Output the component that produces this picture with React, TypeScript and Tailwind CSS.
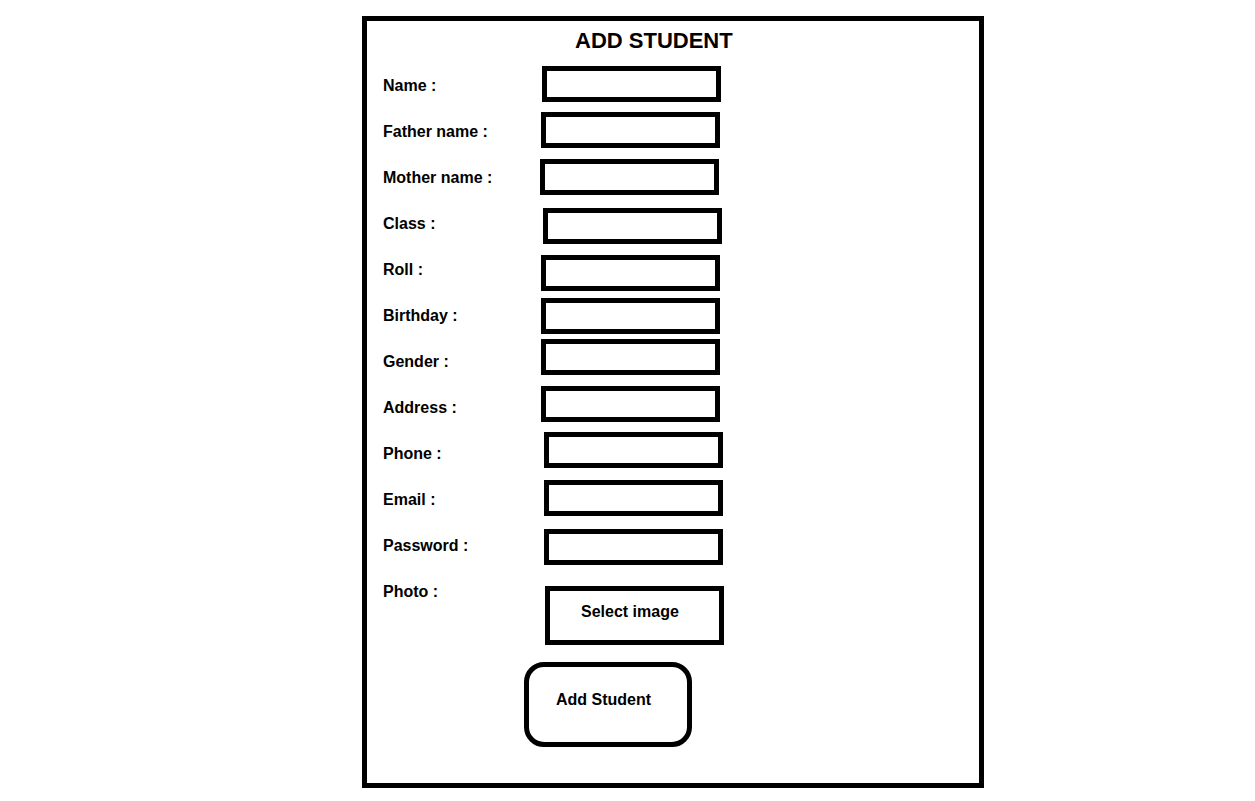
import React from "react";

const labels = [
  "Name :",
  "Father name :",
  "Mother name :",
  "Class :",
  "Roll :",
  "Birthday :",
  "Gender :",
  "Address :",
  "Phone :",
  "Email :",
  "Password :",
  "Photo :",
];

const inputs: { key: string; cls: string }[] = [
  { key: "name", cls: "mt-0 ml-[2px]" },
  { key: "father", cls: "mt-[10px] ml-[1px]" },
  { key: "mother", cls: "mt-[11px] ml-0" },
  { key: "class", cls: "mt-[13px] ml-[3px]" },
  { key: "roll", cls: "mt-[11px] ml-[1px]" },
  { key: "birthday", cls: "mt-[7px] ml-[1px]" },
  { key: "gender", cls: "mt-[5px] ml-[1px]" },
  { key: "address", cls: "mt-[11px] ml-[1px]" },
  { key: "phone", cls: "mt-[10px] ml-[4px]" },
  { key: "email", cls: "mt-[12px] ml-[4px]" },
  { key: "password", cls: "mt-[13px] ml-[4px]" },
];

export default function App() {
  return (
    <div
      className="min-h-[801px] w-full bg-white text-black"
      style={{ fontFamily: '"Liberation Sans", Arial, sans-serif' }}
    >
      <div className="pt-[16px] pl-[362px]">
        <div className="w-[622px] h-[772px] border-[5px] border-black flex flex-col">
          <h1 className="ml-[208px] mt-[9px] text-[22px] leading-[22px] font-bold">
            ADD STUDENT
          </h1>
          <div className="mt-[14px] flex flex-row">
            <div className="w-[173px] pl-[16px] pt-[12px] flex flex-col gap-[30px]">
              {labels.map((l) => (
                <div key={l} className="text-[16px] leading-[16px] font-bold whitespace-nowrap">
                  {l}
                </div>
              ))}
            </div>
            <div className="flex flex-col items-start">
              {inputs.map((i) => (
                <div
                  key={i.key}
                  className={`w-[179px] h-[36px] border-[5px] border-black bg-white ${i.cls}`}
                />
              ))}
              <div className="mt-[21px] ml-[5px] w-[179px] h-[59px] border-[5px] border-black pl-[31px] pt-[9px]">
                <span className="text-[16px] leading-[16px] font-bold whitespace-nowrap">
                  Select image
                </span>
              </div>
              <div className="mt-[17px] -ml-[16px] w-[168px] h-[85px] border-[5px] border-black rounded-[20px] pl-[27px] pt-[21px]">
                <span className="text-[16px] leading-[16px] font-bold whitespace-nowrap">
                  Add Student
                </span>
              </div>
            </div>
          </div>
        </div>
      </div>
    </div>
  );
}
